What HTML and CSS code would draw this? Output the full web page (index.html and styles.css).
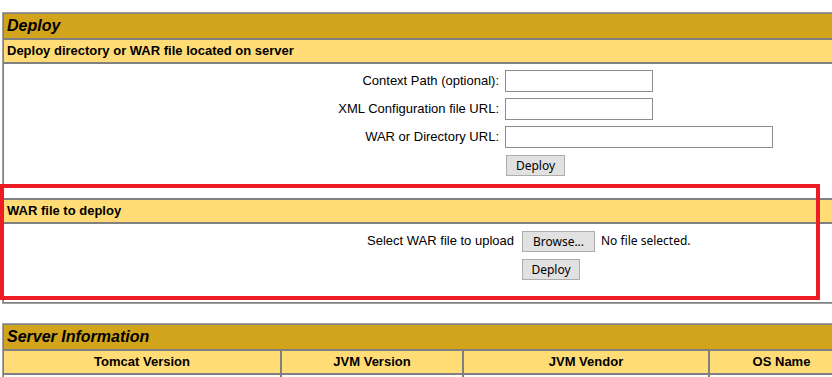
FILE: index.html
```html
<!DOCTYPE html>
<html lang="en">
<head>
    <meta charset="UTF-8">
    <title>Tomcat Web Application Manager</title>
    <link rel="stylesheet" href="styles.css">
</head>
<body>
    <!-- Deploy section -->
    <table class="mgr deploy-table">
        <tr><td class="title">Deploy</td></tr>
        <tr><td class="header-left">Deploy directory or WAR file located on server</td></tr>
        <tr>
            <td class="body-cell">
                <form class="deploy-form" method="post" action="#">
                    <div class="form-grid server-grid">
                        <div class="row-right">Context Path (optional):</div>
                        <div class="row-left"><input type="text" class="text-input" name="deployPath"></div>

                        <div class="row-right">XML Configuration file URL:</div>
                        <div class="row-left"><input type="text" class="text-input" name="deployConfig"></div>

                        <div class="row-right">WAR or Directory URL:</div>
                        <div class="row-left"><input type="text" class="text-input wide" name="deployWar"></div>

                        <div class="row-right">&nbsp;</div>
                        <div class="row-left"><button type="submit" class="submit-btn">Deploy</button></div>
                    </div>
                </form>
            </td>
        </tr>
        <tr><td class="header-left">WAR file to deploy</td></tr>
        <tr>
            <td class="body-cell">
                <form class="deploy-form" method="post" action="#">
                    <div class="form-grid upload-grid">
                        <div class="row-right">Select WAR file to upload</div>
                        <div class="row-left file-pick">
                            <button type="button" class="submit-btn browse-btn">Browse...</button>
                            <span class="file-name">No file selected.</span>
                        </div>

                        <div class="row-right">&nbsp;</div>
                        <div class="row-left"><button type="submit" class="submit-btn">Deploy</button></div>
                    </div>
                </form>
            </td>
        </tr>
    </table>

    <!-- Server information -->
    <table class="mgr info-table">
        <colgroup>
            <col class="col-tomcat">
            <col class="col-jvm">
            <col class="col-vendor">
            <col class="col-os">
        </colgroup>
        <tr><td class="title" colspan="4">Server Information</td></tr>
        <tr>
            <td class="header-center">Tomcat Version</td>
            <td class="header-center">JVM Version</td>
            <td class="header-center">JVM Vendor</td>
            <td class="header-center">OS Name</td>
        </tr>
        <tr>
            <td class="row-center">&nbsp;</td>
            <td class="row-center">&nbsp;</td>
            <td class="row-center">&nbsp;</td>
            <td class="row-center">&nbsp;</td>
        </tr>
    </table>

    <!-- annotation drawn over the upload section -->
    <div class="highlight-box"></div>
</body>
</html>
```

FILE: styles.css
```css
body {
    margin: 12px 0 0 2px;
    overflow: hidden;
    background-color: #ffffff;
    color: #000000;
    font-family: "Liberation Sans", Arial, sans-serif;
    font-size: 13px;
}

.mgr {
    border-collapse: separate;
    border-spacing: 0;
    border: 1px solid #a0a0a0;
    table-layout: fixed;
}

.mgr td {
    border: 1px solid #808080;
    padding: 3px;
}

.deploy-table {
    width: 1000px;
    margin-bottom: 19px;
}

.info-table {
    width: 853px;
}

.col-tomcat { width: 278px; }
.col-jvm { width: 182px; }
.col-vendor { width: 246px; }
.col-os { width: 145px; }

.title {
    background-color: #d2a41c;
    font-size: 16px;
    line-height: 18px;
    font-weight: bold;
    font-style: italic;
    text-align: left;
}

.header-left,
.header-center {
    background-color: #ffdc75;
    font-size: 13px;
    line-height: 16px;
    font-weight: bold;
}

.header-left {
    text-align: left;
}

.header-center {
    text-align: center;
}

.row-center {
    text-align: center;
    line-height: 16px;
}

.deploy-form {
    margin: 0 0 16px 0;
}

.form-grid {
    display: grid;
    align-items: center;
}

.server-grid {
    grid-template-columns: 495px 1fr;
}

.upload-grid {
    grid-template-columns: 512px 1fr;
}

.row-right {
    padding: 3px;
    text-align: right;
    line-height: 22px;
}

.upload-grid .row-right {
    padding-right: 5px;
}

.row-left {
    padding: 3px;
    height: 22px;
    display: flex;
    align-items: flex-start;
}

.text-input {
    width: 148px;
    height: 22px;
    margin: 0;
    padding: 0 2px;
    border: 1px solid #8c8c8c;
    box-sizing: border-box;
    background-color: #ffffff;
}

.text-input.wide {
    width: 268px;
}

.submit-btn {
    width: 58px;
    height: 21px;
    margin: 1px 0 0 0;
    padding: 0 6px;
    border: 1px solid #adadad;
    background-color: #e1e1e1;
    color: #000000;
    font-family: "Noto Sans", "DejaVu Sans", sans-serif;
    font-size: 12px;
    line-height: 18px;
    cursor: pointer;
}

.server-grid .submit-btn {
    width: 59px;
    margin-left: 1px;
}

.browse-btn {
    width: 73px;
}

.file-name {
    margin-left: 6px;
    font-family: "Noto Sans", "DejaVu Sans", sans-serif;
    font-size: 12px;
    line-height: 22px;
}

.highlight-box {
    position: absolute;
    left: 0;
    top: 184px;
    width: 820px;
    height: 116px;
    border: 4px solid #ed1c24;
    box-sizing: border-box;
    pointer-events: none;
}
```
